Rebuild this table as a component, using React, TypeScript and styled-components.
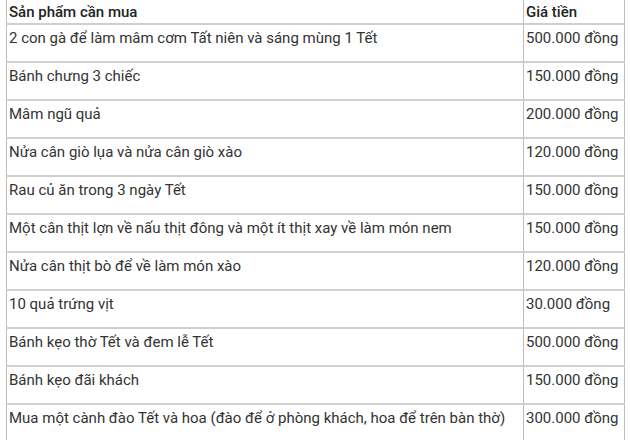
import React from "react";
import styled, { createGlobalStyle } from "styled-components";

const GlobalStyle = createGlobalStyle`
  html, body {
    margin: 0;
    padding: 0;
    background: #fff;
  }
`;

const Wrapper = styled.div`
  padding: 0 5px 0 6px;
  font-family: Roboto, "Liberation Sans", sans-serif;
  color: #333;
`;

const Table = styled.table`
  border-collapse: collapse;
  width: 619px;
  table-layout: fixed;
  font-size: 15px;
`;

const HeadCell = styled.th<{ $w: number }>`
  width: ${(p) => p.$w}px;
  text-align: left;
  font-weight: 500;
  height: 23px;
  padding: 0 2px;
  line-height: 20px;
  vertical-align: middle;
  border-left: 1px solid #bdbdbd;
  border-right: 1px solid #bdbdbd;
  border-bottom: 2px solid #cfcfcf;
  color: #222;
`;

const Cell = styled.td`
  padding: 3px 2px 13px 2px;
  line-height: 20px;
  height: 20px;
  vertical-align: top;
  border-left: 1px solid #bdbdbd;
  border-right: 1px solid #bdbdbd;
  border-bottom: 2px solid #cfcfcf;
  white-space: nowrap;
  overflow: hidden;
`;

const rows: [string, string][] = [
  ["2 con gà để làm mâm cơm Tất niên và sáng mùng 1 Tết", "500.000 đồng"],
  ["Bánh chưng 3 chiếc", "150.000 đồng"],
  ["Mâm ngũ quả", "200.000 đồng"],
  ["Nửa cân giò lụa và nửa cân giò xào", "120.000 đồng"],
  ["Rau củ ăn trong 3 ngày Tết", "150.000 đồng"],
  ["Một cân thịt lợn về nấu thịt đông và một ít thịt xay về làm món nem", "150.000 đồng"],
  ["Nửa cân thịt bò để về làm món xào", "120.000 đồng"],
  ["10 quả trứng vịt", "30.000 đồng"],
  ["Bánh kẹo thờ Tết và đem lễ Tết", "500.000 đồng"],
  ["Bánh kẹo đãi khách", "150.000 đồng"],
  ["Mua một cành đào Tết và hoa (đào để ở phòng khách, hoa để trên bàn thờ)", "300.000 đồng"],
];

export default function App() {
  return (
    <Wrapper>
      <GlobalStyle />
      <Table>
        <thead>
          <tr>
            <HeadCell $w={512}>Sản phẩm cần mua</HeadCell>
            <HeadCell $w={96}>Giá tiền</HeadCell>
          </tr>
        </thead>
        <tbody>
          {rows.map(([item, price]) => (
            <tr key={item}>
              <Cell>{item}</Cell>
              <Cell>{price}</Cell>
            </tr>
          ))}
        </tbody>
      </Table>
    </Wrapper>
  );
}
